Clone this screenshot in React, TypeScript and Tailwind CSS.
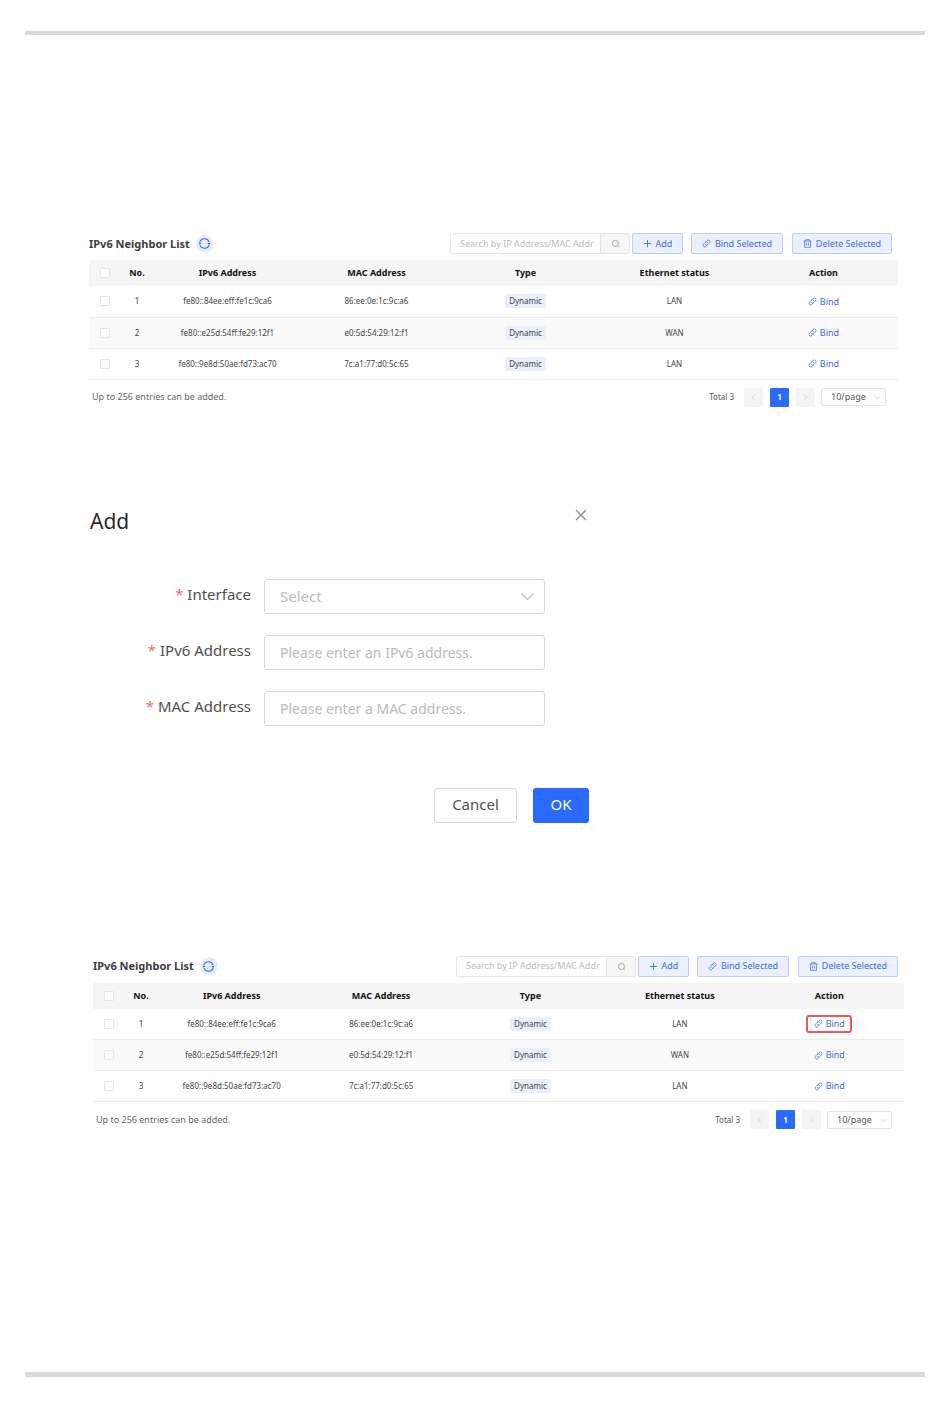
import { useState } from 'react'
import clsx from 'clsx'

type Neighbor = {
  no: number
  ip: string
  mac: string
  type: string
  status: string
}

const neighbors: Neighbor[] = [
  { no: 1, ip: 'fe80::84ee:eff:fe1c:9ca6', mac: '86:ee:0e:1c:9c:a6', type: 'Dynamic', status: 'LAN' },
  { no: 2, ip: 'fe80::e25d:54ff:fe29:12f1', mac: 'e0:5d:54:29:12:f1', type: 'Dynamic', status: 'WAN' },
  { no: 3, ip: 'fe80::9e8d:50ae:fd73:ac70', mac: '7c:a1:77:d0:5c:65', type: 'Dynamic', status: 'LAN' },
]

const columns = ['IPv6 Address', 'MAC Address', 'Type', 'Ethernet status', 'Action']

const toolButton =
  'flex h-[21px] items-center justify-center gap-1 rounded-xs border border-[#bccdf8] bg-[#ebf0fe] text-[9px] whitespace-nowrap text-[#3d6be0]'

function LinkIcon() {
  return (
    <svg viewBox="0 0 16 16" className="size-[9px] shrink-0" fill="none" stroke="currentColor" strokeWidth="1.3" strokeLinecap="round">
      <path d="M6.6 5.2 9 2.7a3 3 0 0 1 4.3 4.2L10.2 10a3 3 0 0 1-4.3 0" />
      <path d="M9.4 10.8 7 13.3a3 3 0 0 1-4.3-4.2L5.8 6a3 3 0 0 1 4.3 0" />
    </svg>
  )
}

function TrashIcon() {
  return (
    <svg viewBox="0 0 16 16" className="size-[9px] shrink-0" fill="none" stroke="currentColor" strokeWidth="1.3">
      <path d="M1 3.5h14M5 3.5V1.2h6v2.3M2.7 3.5v11.3h10.6V3.5M6.2 6.5v5M9.8 6.5v5" />
    </svg>
  )
}

function PlusIcon() {
  return (
    <svg viewBox="0 0 10 10" className="size-[9px] shrink-0" fill="none" stroke="currentColor">
      <path d="M5 1v8M1 5h8" />
    </svg>
  )
}

function RefreshIcon() {
  return (
    <svg viewBox="0 0 16 16" className="size-[13px]" fill="none" stroke="currentColor" strokeWidth="1.3">
      <path d="M2.2 6.6A6 6 0 0 1 13.6 6M13.8 9.4A6 6 0 0 1 2.4 10" />
      <path d="M.6 9.2 2 6.4l2.6 1.8ZM15.4 6.8 14 9.6l-2.6-1.8Z" fill="currentColor" stroke="none" />
    </svg>
  )
}

function Chevron({ className, d = 'M1 3l4 4 4-4' }: { className?: string; d?: string }) {
  return (
    <svg viewBox="0 0 10 10" className={className} fill="none" stroke="currentColor">
      <path d={d} />
    </svg>
  )
}

function Checkbox({ label }: { label: string }) {
  return (
    <input
      type="checkbox"
      aria-label={label}
      className="block size-[10px] mx-auto appearance-none rounded-[1px] border border-[#e6e6e6] bg-white checked:bg-[#2a6aff]"
    />
  )
}

function NeighborList({ highlighted }: { highlighted?: number }) {
  return (
    <div>
      <div className="flex items-center justify-between pr-1.5">
        <div className="flex items-center gap-1.5">
          <h2 className="text-[11px] leading-5 font-bold text-[#404040]">IPv6 Neighbor List</h2>
          <button type="button" aria-label="Refresh" className="flex size-[18px] items-center justify-center rounded-full bg-[#e6eefe] text-[#3d6be0]">
            <RefreshIcon />
          </button>
        </div>
        <div className="flex">
          <div className="mr-0.5 flex h-[21px] w-[180px] rounded-xs border border-[#e6e6e6]">
            <input
              type="text"
              aria-label="Search"
              placeholder="Search by IP Address/MAC Addr"
              className="min-w-0 flex-1 pr-1 pl-[9px] text-[9px] text-[#606060] placeholder:text-[#bdbdbd]"
            />
            <button type="button" aria-label="Search" className="flex w-[29px] items-center justify-center border-l border-[#e6e6e6] bg-[#f6f6f6] text-[#a0a0a0]">
              <svg viewBox="0 0 10 10" className="size-[9px]" fill="none" stroke="currentColor">
                <circle cx="5" cy="5" r="3.4" />
                <path d="M7.2 7.4l1.4 1.2" />
              </svg>
            </button>
          </div>
          <button type="button" className={clsx(toolButton, 'w-[51px]')}>
            <PlusIcon />
            Add
          </button>
          <button type="button" className={clsx(toolButton, 'ml-2 w-[92px]')}>
            <LinkIcon />
            Bind Selected
          </button>
          <button type="button" className={clsx(toolButton, 'ml-[9px] w-[100px]')}>
            <TrashIcon />
            Delete Selected
          </button>
        </div>
      </div>

      <table className="mt-1.5 w-full table-fixed text-center text-[8px] text-[#454545]">
        <thead>
          <tr className="h-[26px] bg-[#f5f5f5] text-[9px] text-[#111]">
            <th className="w-8">
              <Checkbox label="Select all" />
            </th>
            <th className="w-8">No.</th>
            {columns.map((column) => (
              <th key={column}>{column}</th>
            ))}
          </tr>
        </thead>
        <tbody>
          {neighbors.map((row) => (
            <tr key={row.no} className="h-[31px] border-b border-[#ededed] even:bg-[#fafafa]">
              <td>
                <Checkbox label={`Select entry ${row.no}`} />
              </td>
              <td>{row.no}</td>
              <td>{row.ip}</td>
              <td>{row.mac}</td>
              <td>
                <span className="inline-block rounded-xs bg-[#e9effd] px-1 leading-[14px]">{row.type}</span>
              </td>
              <td>{row.status}</td>
              <td>
                <button
                  type="button"
                  className={clsx(
                    'mx-auto flex h-[18px] w-[46px] items-center justify-center gap-[3px] rounded-[3px] border-2 text-[9px] text-[#3d6be0]',
                    row.no === highlighted ? 'border-[#ee5a5a]' : 'border-transparent',
                  )}
                >
                  <LinkIcon />
                  Bind
                </button>
              </td>
            </tr>
          ))}
        </tbody>
      </table>

      <div className="mt-2 flex items-center justify-between pr-3 pl-[3px]">
        <p className="text-[9px] text-[#666]">Up to 256 entries can be added.</p>
        <div className="flex items-center">
          <span className="mr-2.5 text-[8px] text-[#555]">Total 3</span>
          <button type="button" aria-label="Previous page" className="flex size-[19px] items-center justify-center rounded-[1px] bg-[#f4f4f4] text-[#c8c8c8]">
            <Chevron className="size-[7px]" d="M7 1L3 5l4 4" />
          </button>
          <button type="button" className="mx-[7px] size-[19px] rounded-[1px] bg-[#2a6aff] text-[8px] font-bold text-white">
            1
          </button>
          <button type="button" aria-label="Next page" className="flex size-[19px] items-center justify-center rounded-[1px] bg-[#f4f4f4] text-[#c8c8c8]">
            <Chevron className="size-[7px]" d="M3 1l4 4-4 4" />
          </button>
          <div className="relative ml-1.5">
            <select aria-label="Page size" className="block h-[18px] w-[65px] appearance-none rounded-xs border border-[#e4e4e4] bg-white pl-[9px] text-[9px] text-[#555]">
              <option>10/page</option>
              <option>20/page</option>
            </select>
            <Chevron className="pointer-events-none absolute top-1.5 right-[5px] size-[7px] text-[#c4c4c4]" />
          </div>
        </div>
      </div>
    </div>
  )
}

const field =
  'block h-[35px] w-full appearance-none rounded-[3px] border border-[#d8d8d8] bg-white px-[15px] text-[#606060] placeholder:text-[#bbb]'

function FieldLabel({ htmlFor, text }: { htmlFor: string; text: string }) {
  return (
    <label htmlFor={htmlFor} className="w-[161px] shrink-0 pb-1 text-right text-[15px] whitespace-nowrap text-[#505050]">
      <span className="text-[#f56c6c]">*</span> {text}
    </label>
  )
}

function AddDialog() {
  const [iface, setIface] = useState('')

  return (
    <form role="dialog" aria-labelledby="add-title" className="max-w-[499px]" onSubmit={(e) => e.preventDefault()}>
      <div className="flex items-start justify-between">
        <h2 id="add-title" className="text-[21px] leading-7 text-[#2c2c2c]">Add</h2>
        <button type="button" aria-label="Close" className="flex size-[17px] items-center justify-center text-[#888]">
          <svg viewBox="0 0 12 12" className="size-3" fill="none" stroke="currentColor" strokeWidth="1.2">
            <path d="M1 1l10 10M11 1L1 11" />
          </svg>
        </button>
      </div>

      <div className="mt-11 mr-11 flex flex-col gap-[21px]">
        <div className="flex items-center gap-[13px]">
          <FieldLabel htmlFor="interface" text="Interface" />
          <div className="relative flex-1">
            <select
              id="interface"
              value={iface}
              onChange={(e) => setIface(e.target.value)}
              className={clsx(field, 'text-[15px]', !iface && 'text-[#bbb]')}
            >
              <option value="">Select</option>
              <option value="LAN">LAN</option>
              <option value="WAN">WAN</option>
            </select>
            <Chevron className="pointer-events-none absolute top-2.5 right-2.5 size-[15px] text-[#c4c4c4]" />
          </div>
        </div>
        <div className="flex items-center gap-[13px]">
          <FieldLabel htmlFor="ipv6" text="IPv6 Address" />
          <input id="ipv6" type="text" placeholder="Please enter an IPv6 address." className={clsx(field, 'text-[14px]')} />
        </div>
        <div className="flex items-center gap-[13px]">
          <FieldLabel htmlFor="mac" text="MAC Address" />
          <input id="mac" type="text" placeholder="Please enter a MAC address." className={clsx(field, 'text-[14px]')} />
        </div>
      </div>

      <div className="mt-[62px] flex justify-end gap-4 text-[15px]">
        <button type="button" className="h-[35px] w-[83px] rounded-[3px] border border-[#d8d8d8] pb-0.5 text-[#505050]">
          Cancel
        </button>
        <button type="submit" className="h-[35px] w-14 rounded-[3px] bg-[#2a6aff] pb-0.5 text-white">
          OK
        </button>
      </div>
    </form>
  )
}

export default function App() {
  return (
    <main className="bg-white px-[25px] pt-[31px] pb-[31px] font-['Noto_Sans','Open_Sans',sans-serif]">
      <hr className="h-1 border-0 bg-[#d9d9d9]" />
      <section className="mt-[198px] mr-[27px] ml-16">
        <NeighborList />
      </section>
      <section className="mt-[100px] ml-[65px]">
        <AddDialog />
      </section>
      <section className="mt-[133px] mr-[21px] ml-[68px]">
        <NeighborList highlighted={1} />
      </section>
      <hr className="mt-[243px] h-[5px] border-0 bg-[#d9d9d9]" />
    </main>
  )
}
